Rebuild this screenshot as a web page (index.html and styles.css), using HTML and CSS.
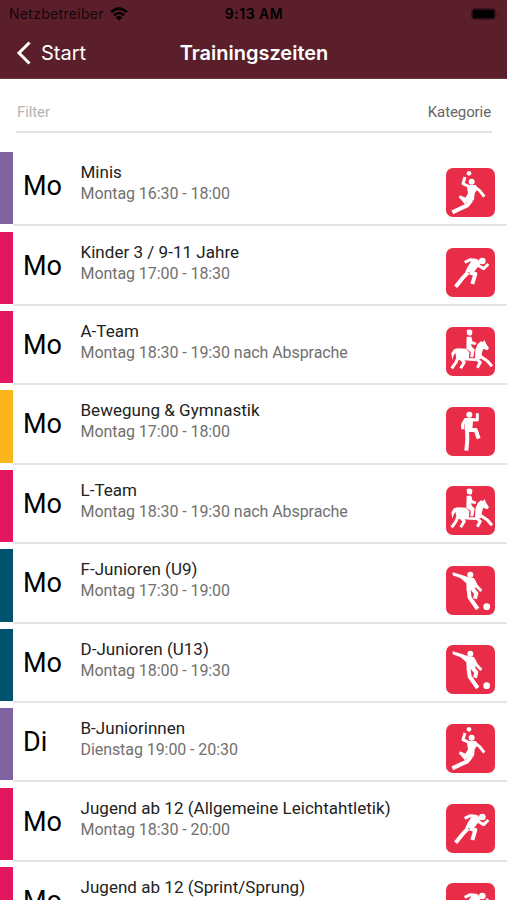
FILE: index.html
```html
<!DOCTYPE html>
<html lang="de">
<head>
    <meta charset="UTF-8">
    <meta name="viewport" content="width=device-width, initial-scale=1.0">
    <title>Trainingszeiten</title>
    <link rel="stylesheet" href="styles.css">
</head>
<body>
    <svg class="sprites" width="0" height="0">
        <symbol id="handball" viewBox="0 0 147 147">
            <circle class="fill" cx="69" cy="16" r="7"/>
            <circle class="fill" cx="77" cy="41" r="9"/>
            <path class="limb" d="M72 57L51 47L57 27"/>
            <path class="fill" d="M62 52L90 51L95 62L86 76L84 96L68 104L56 94L66 76Z"/>
            <path class="limb" d="M88 58L101 68L115 86"/>
            <path class="limb" d="M66 97L40 86M45 88L60 106"/>
            <path class="limb wide" d="M76 97L64 112L44 121L19 133"/>
        </symbol>
        <symbol id="laufen" viewBox="0 0 147 147">
            <circle class="fill" cx="109" cy="39" r="10"/>
            <path class="limb" d="M91 37L73 35L56 43"/>
            <path class="fill" d="M80 34L96 34L103 48L82 74L58 71L65 56Z"/>
            <path class="limb" d="M94 50L113 62L127 48"/>
            <path class="limb wide" d="M66 73L50 90L29 116"/>
            <path class="limb wide" d="M71 74L88 78L79 108"/>
        </symbol>
        <symbol id="reiten" viewBox="0 0 147 147">
            <path class="fill" d="M62 10Q70 4 79 11L78 23Q70 29 63 22Z"/>
            <path class="fill" d="M62 29L76 29L79 43L91 47L89 54L75 52L78 60L86 67L82 91L73 91L74 75L61 65Z"/>
            <path class="fill" d="M36 64L60 65L70 76L69 94L87 94L88 68L95 51L105 43L111 45L116 39L119 48L129 64L124 70L112 65L107 80L110 94L86 102L52 100L34 98L29 85L31 78L24 83L19 98L16 79L24 67Z"/>
            <path class="limb" d="M36 91L30 106L17 124"/>
            <path class="limb" d="M44 95L55 106L44 124"/>
            <path class="limb" d="M91 96L103 106L94 122"/>
            <path class="limb" d="M103 88L124 102L138 118"/>
        </symbol>
        <symbol id="gymnastik" viewBox="0 0 147 147">
            <circle class="fill" cx="70" cy="23" r="9"/>
            <path class="fill" d="M55 33L82 33L79 66L56 70Z"/>
            <path class="limb" d="M78 38L94 39L94 19"/>
            <path class="limb" d="M58 38L50 52L50 67"/>
            <path class="limb wide" d="M63 67L64 97L61 131"/>
            <path class="limb wide" d="M68 69L89 69L98 95"/>
        </symbol>
        <symbol id="fussball" viewBox="0 0 147 147">
            <circle class="fill" cx="73" cy="26" r="9"/>
            <circle class="fill" cx="122" cy="122" r="10"/>
            <path class="fill" d="M20 19L48 27L65 33L84 36L88 53L88 71L62 74L61 52L44 37L20 28Z"/>
            <path class="limb" d="M82 41L91 59L106 75"/>
            <path class="limb wide" d="M68 72L71 95L95 129"/>
            <path class="limb wide" d="M80 70L91 82L87 98"/>
        </symbol>
    </svg>

    <header class="header">
        <div class="status">
            <div class="carrier">
                Netzbetreiber
                <svg class="wifi" viewBox="0 0 18 14">
                    <path d="M1.2 5.2Q9 -2 16.8 5.2M4 8.2Q9 3.7 14 8.2"/>
                    <path class="dot" d="M5.9 10.4Q9 7.8 12.1 10.4L9 13.5Z"/>
                </svg>
            </div>
            <div class="clock">9:13 AM</div>
            <svg class="battery" viewBox="0 0 28 12">
                <rect class="shell" x="0.5" y="0.5" width="24" height="11" rx="3"/>
                <rect x="1.5" y="1.5" width="22" height="9" rx="1.5"/>
                <path class="shell" d="M26 4Q28 6 26 8"/>
            </svg>
        </div>
        <nav class="nav">
            <a class="back">
                <svg viewBox="0 0 16 24"><path d="M13.5 1.5L3 12L13.5 22.5"/></svg>
                Start
            </a>
            <h1>Trainingszeiten</h1>
        </nav>
    </header>

    <div class="filter">
        <span class="placeholder">Filter</span>
        <span class="category">Kategorie</span>
    </div>

    <main class="list">
        <div class="row violet">
            <div class="day">Mo</div>
            <div class="info">
                <div class="name">Minis</div>
                <div class="time">Montag 16:30 - 18:00</div>
            </div>
            <svg class="icon"><use href="#handball"/></svg>
        </div>
        <div class="row pink">
            <div class="day">Mo</div>
            <div class="info">
                <div class="name">Kinder 3 / 9-11 Jahre</div>
                <div class="time">Montag 17:00 - 18:30</div>
            </div>
            <svg class="icon"><use href="#laufen"/></svg>
        </div>
        <div class="row pink">
            <div class="day">Mo</div>
            <div class="info">
                <div class="name">A-Team</div>
                <div class="time">Montag 18:30 - 19:30 nach Absprache</div>
            </div>
            <svg class="icon"><use href="#reiten"/></svg>
        </div>
        <div class="row yellow">
            <div class="day">Mo</div>
            <div class="info">
                <div class="name">Bewegung &amp; Gymnastik</div>
                <div class="time">Montag 17:00 - 18:00</div>
            </div>
            <svg class="icon"><use href="#gymnastik"/></svg>
        </div>
        <div class="row pink">
            <div class="day">Mo</div>
            <div class="info">
                <div class="name">L-Team</div>
                <div class="time">Montag 18:30 - 19:30 nach Absprache</div>
            </div>
            <svg class="icon"><use href="#reiten"/></svg>
        </div>
        <div class="row blue">
            <div class="day">Mo</div>
            <div class="info">
                <div class="name">F-Junioren (U9)</div>
                <div class="time">Montag 17:30 - 19:00</div>
            </div>
            <svg class="icon"><use href="#fussball"/></svg>
        </div>
        <div class="row blue">
            <div class="day">Mo</div>
            <div class="info">
                <div class="name">D-Junioren (U13)</div>
                <div class="time">Montag 18:00 - 19:30</div>
            </div>
            <svg class="icon"><use href="#fussball"/></svg>
        </div>
        <div class="row violet">
            <div class="day">Di</div>
            <div class="info">
                <div class="name">B-Juniorinnen</div>
                <div class="time">Dienstag 19:00 - 20:30</div>
            </div>
            <svg class="icon"><use href="#handball"/></svg>
        </div>
        <div class="row pink">
            <div class="day">Mo</div>
            <div class="info">
                <div class="name">Jugend ab 12 (Allgemeine Leichtahtletik)</div>
                <div class="time">Montag 18:30 - 20:00</div>
            </div>
            <svg class="icon"><use href="#laufen"/></svg>
        </div>
        <div class="row pink">
            <div class="day">Mo</div>
            <div class="info">
                <div class="name">Jugend ab 12 (Sprint/Sprung)</div>
            </div>
            <svg class="icon"><use href="#laufen"/></svg>
        </div>
    </main>
</body>
</html>
```
FILE: styles.css
```css
* {
    box-sizing: border-box;
}
body {
    margin: 0;
    height: 900px;
    overflow: hidden;
    background-color: #fff;
    font-family: Roboto, sans-serif;
}
.sprites {
    display: block;
}
.header {
    height: 79px;
    background-color: #5a1f2b;
    border-bottom: 1px solid #6e3843;
}
.status {
    display: grid;
    grid-template-columns: 1fr auto 1fr;
    align-items: center;
    height: 27px;
    padding: 0 8px 0 9px;
    font-family: Inter, sans-serif;
    font-size: 14px;
    color: #16060a;
}
.carrier {
    display: flex;
    align-items: center;
    gap: 6px;
    letter-spacing: 0.3px;
}
.wifi {
    width: 18px;
    height: 14px;
    fill: none;
    stroke: #000;
    stroke-width: 2.5;
}
.wifi .dot {
    fill: #000;
    stroke: none;
}
.clock {
    font-weight: 600;
    letter-spacing: 0.5px;
    color: #000;
}
.battery {
    justify-self: end;
    width: 28px;
    height: 12px;
}
.battery .shell {
    fill: none;
    stroke: #3d141d;
}
.nav {
    display: grid;
    grid-template-columns: 1fr auto 1fr;
    align-items: center;
    height: 51px;
    padding: 0 15px 0 16px;
    color: #fff;
    font-family: Inter, sans-serif;
}
.back {
    display: flex;
    align-items: center;
    gap: 9px;
    font-size: 20px;
}
.back svg {
    width: 16px;
    height: 24px;
    fill: none;
    stroke: #fff;
    stroke-width: 3;
}
.nav h1 {
    margin: 0;
    font-size: 20px;
    font-weight: 600;
}
.filter {
    display: flex;
    justify-content: space-between;
    align-items: center;
    height: 54px;
    margin: 0 15px 0 16px;
    padding: 14px 1px 0;
    border-bottom: 2px solid #e2e2e2;
    font-size: 15px;
    letter-spacing: -0.1px;
}
.placeholder {
    color: #b5b5b5;
}
.category {
    color: #666;
}
.list {
    padding-top: 12.1px;
}
.row {
    display: grid;
    grid-template-columns: 67px 1fr 61px;
    grid-template-rows: 72.3px 2px;
    height: 79.44px;
    padding-top: 7px;
}
.row::after {
    content: "";
    grid-column: 1 / -1;
    margin-left: 13.4px;
    background-color: #e4e4e4;
}
.day {
    padding: 18px 0 0 10px;
    border-left: 13.4px solid;
    color: #000;
    font-size: 27px;
    line-height: 32px;
}
.violet .day {
    border-color: #8064a2;
}
.pink .day {
    border-color: #e2175f;
}
.yellow .day {
    border-color: #fbb51d;
}
.blue .day {
    border-color: #00536f;
}
.info {
    padding: 10px 0 0 13.5px;
}
.name {
    color: #222;
    font-size: 17px;
    line-height: 21px;
    letter-spacing: 0.03px;
}
.time {
    color: #707070;
    font-size: 16px;
    line-height: 21px;
    letter-spacing: -0.07px;
}
.icon {
    width: 49px;
    height: 49px;
    margin-top: 16.3px;
    border-radius: 7px;
    background-color: #e92d48;
}
.fill {
    fill: #fff;
}
.limb {
    fill: none;
    stroke: #fff;
    stroke-width: 9;
    stroke-linejoin: round;
}
.wide {
    stroke-width: 12;
}
```
